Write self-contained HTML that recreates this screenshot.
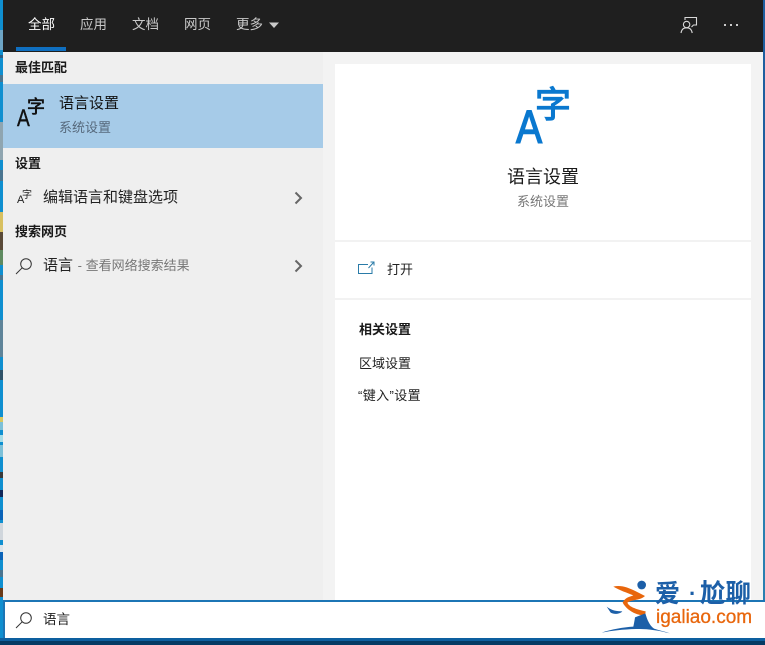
<!DOCTYPE html>
<html lang="zh">
<head>
<meta charset="utf-8">
<style>
html,body{margin:0;padding:0;}
body{width:765px;height:645px;overflow:hidden;position:relative;background:#0f8fd0;font-family:"Liberation Sans","Noto Sans CJK SC",sans-serif;}
div,svg{position:absolute;}
.t{white-space:nowrap;line-height:20px;}
.nav{top:15px;font-size:13.5px;color:#c9c9c9;}
.h{font-size:13px;font-weight:bold;color:#1a1a1a;}
.s{left:0;width:3px;}
</style>
</head>
<body>
<!-- desktop strips -->
<div class="s" style="top:0;height:645px;background:#0f8fd0"></div>
<div class="s" style="top:30px;height:20px;background:#6ea5c5"></div>
<div class="s" style="top:55px;height:3px;background:#2d5f85"></div>
<div class="s" style="top:75px;height:7px;background:#4a7590"></div>
<div class="s" style="top:122px;height:38px;background:#8fa5b0"></div>
<div class="s" style="top:170px;height:11px;background:#4a7590"></div>
<div class="s" style="top:212px;height:20px;background:#d8c060"></div>
<div class="s" style="top:232px;height:18px;background:#5a4a38"></div>
<div class="s" style="top:250px;height:15px;background:#5f8a60"></div>
<div class="s" style="top:275px;height:5px;background:#4a7590"></div>
<div class="s" style="top:320px;height:37px;background:#5f8499"></div>
<div class="s" style="top:370px;height:10px;background:#2f5268"></div>
<div class="s" style="top:417px;height:5px;background:#d8c860"></div>
<div class="s" style="top:422px;height:8px;background:#7cc0d8"></div>
<div class="s" style="top:435px;height:7px;background:#a5dde8"></div>
<div class="s" style="top:445px;height:12px;background:#7cc0d8"></div>
<div class="s" style="top:472px;height:6px;background:#3a3a3a"></div>
<div class="s" style="top:490px;height:7px;background:#10285a"></div>
<div class="s" style="top:510px;height:10px;background:#0a63b8"></div>
<div class="s" style="top:523px;height:17px;background:#d0d6dc"></div>
<div class="s" style="top:545px;height:7px;background:#d8e4ec"></div>
<div class="s" style="top:552px;height:8px;background:#0a63b8"></div>
<div class="s" style="top:570px;height:7px;background:#4a7590"></div>
<div class="s" style="top:588px;height:9px;background:#6a3a18"></div>
<div style="left:763px;top:0;width:2px;height:600px;background:#1f5f9f"></div>
<div style="left:763px;top:400px;width:2px;height:200px;background:#2a7fb0"></div>

<!-- header -->
<div style="left:3px;top:0;width:760px;height:52px;background:#1f1f1f"></div>
<div class="t nav" style="left:28px;color:#fff">全部</div>
<div style="left:16px;top:47px;width:50px;height:4px;background:#0f6fc0"></div>
<div class="t nav" style="left:80px">应用</div>
<div class="t nav" style="left:132px">文档</div>
<div class="t nav" style="left:184px">网页</div>
<div class="t nav" style="left:236px">更多</div>
<svg style="left:268px;top:22px" width="12" height="7" viewBox="0 0 12 7"><path d="M1 0.5H11L6 6Z" fill="#c9c9c9"/></svg>

<svg style="left:680px;top:16px" width="18" height="18" viewBox="0 0 18 18" fill="none" stroke="#d8d8d8" stroke-width="1.1">
<path d="M5 4V1.5H16.5V9H13.5L11.5 11"/>
<circle cx="6.6" cy="8.5" r="3.2"/>
<path d="M1 17C1.5 13.5 3.5 11.8 6.6 11.8S11.7 13.5 12.2 17"/>
</svg>
<div style="left:724px;top:24px;width:2px;height:2px;background:#ccc"></div>
<div style="left:730px;top:24px;width:2px;height:2px;background:#ccc"></div>
<div style="left:736px;top:24px;width:2px;height:2px;background:#ccc"></div>

<!-- left panel -->
<div style="left:3px;top:52px;width:320px;height:548px;background:#efefef"></div>
<div class="t h" style="left:15px;top:58px">最佳匹配</div>
<div style="left:3px;top:84px;width:320px;height:64px;background:#a6cbe8"></div>
<div class="t" style="left:17px;top:108px;font-size:24px;line-height:22px;color:#111;-webkit-text-stroke:.4px #111;transform:scaleX(.8);transform-origin:left">A</div>
<div class="t" style="left:27px;top:96px;font-size:18px;line-height:22px;color:#111;-webkit-text-stroke:.6px #111">字</div>
<div class="t" style="left:59px;top:94px;font-size:15px;color:#111">语言设置</div>
<div class="t" style="left:59px;top:118px;font-size:13px;color:#56697c">系统设置</div>

<div class="t h" style="left:15px;top:154px">设置</div>
<div class="t" style="left:17px;top:195px;font-size:11px;line-height:11px;color:#222">A</div>
<div class="t" style="left:22px;top:190px;font-size:10px;line-height:11px;color:#222">字</div>
<div class="t" style="left:43px;top:188px;font-size:15px;color:#222">编辑语言和键盘选项</div>
<svg style="left:294px;top:191px" width="9" height="14" viewBox="0 0 9 14" fill="none" stroke="#666" stroke-width="2"><path d="M1.5 1.5L7 7L1.5 12.5"/></svg>

<div class="t h" style="left:15px;top:222px">搜索网页</div>
<svg style="left:15px;top:257px" width="18" height="18" viewBox="0 0 18 18" fill="none" stroke="#333" stroke-width="1"><circle cx="11" cy="7" r="5.3"/><path d="M7.2 10.8L1 17"/></svg>
<div class="t" style="left:43px;top:256px;font-size:15px;color:#222">语言<span style="font-size:13px;color:#777;margin-left:1px"> - 查看网络搜索结果</span></div>
<svg style="left:294px;top:259px" width="9" height="14" viewBox="0 0 9 14" fill="none" stroke="#666" stroke-width="2"><path d="M1.5 1.5L7 7L1.5 12.5"/></svg>

<!-- right panel -->
<div style="left:323px;top:52px;width:440px;height:548px;background:#f3f3f3"></div>
<div style="left:335px;top:64px;width:416px;height:536px;background:#fff"></div>
<div class="t" style="left:516px;top:107px;font-size:46px;line-height:40px;color:#0a78cf;-webkit-text-stroke:1.4px #0a78cf;transform:scaleX(.85);transform-origin:left">A</div>
<div class="t" style="left:535px;top:85px;font-size:36px;line-height:40px;color:#0a78cf;-webkit-text-stroke:1.2px #0a78cf">字</div>
<div class="t" style="left:507px;top:167px;font-size:18px;color:#1a1a1a">语言设置</div>
<div class="t" style="left:517px;top:192px;font-size:13px;color:#777">系统设置</div>
<div style="left:335px;top:240px;width:416px;height:2px;background:#f2f2f2"></div>
<div style="left:335px;top:298px;width:416px;height:2px;background:#f2f2f2"></div>
<svg style="left:358px;top:261px" width="17" height="14" viewBox="0 0 17 14" fill="none" stroke="#2a7ba8" stroke-width="1"><path d="M10 3.5H0.5V12.5H14V6.5"/><path d="M10.5 7L15.5 1.5M12.5 1H16V4.5"/></svg>
<div class="t" style="left:387px;top:260px;font-size:13px;color:#222">打开</div>
<div class="t h" style="left:359px;top:320px;color:#1a1a1a">相关设置</div>
<div class="t" style="left:359px;top:354px;font-size:13px;color:#222">区域设置</div>
<div class="t" style="left:358px;top:386px;font-size:13px;color:#222;letter-spacing:.4px">“键入”设置</div>

<!-- search box -->
<div style="left:4px;top:600px;width:761px;height:2px;background:#1c75b5"></div>
<div style="left:5px;top:602px;width:760px;height:36px;background:#fff"></div>
<div style="left:3px;top:600px;width:2px;height:38px;background:#1c75b5"></div>
<svg style="left:15px;top:611px" width="18" height="18" viewBox="0 0 18 18" fill="none" stroke="#333" stroke-width="1"><circle cx="11" cy="7" r="5.3"/><path d="M7.2 10.8L1 17"/></svg>
<div class="t" style="left:43px;top:610px;font-size:13.5px;color:#222">语言</div>
<div style="left:0;top:638px;width:765px;height:3px;background:#0d5f9f"></div>
<div style="left:0;top:641px;width:765px;height:4px;background:#053a63"></div>

<!-- watermark -->
<svg style="left:590px;top:570px" width="175" height="75" viewBox="0 0 525 225">
<circle cx="155" cy="45" r="13" fill="#1c5fa8"/>
<path d="M70 50C100 42 130 60 165 78C150 92 125 88 112 98C118 112 140 118 167 124L165 137C135 135 110 120 98 98C105 82 120 80 130 76C110 68 90 62 70 50Z" fill="#e8660c"/>
<path d="M50 110C65 122 80 124 97 124C90 132 72 134 62 128Z" fill="#1c5fa8"/>
<path d="M135 142C145 138 155 134 166 130C172 150 178 165 192 176C210 182 226 185 240 190C200 180 170 176 140 177C100 178 65 182 35 188C65 178 100 172 130 170C132 160 134 150 135 142Z" fill="#1c5fa8"/>
</svg>
<div class="t" style="left:655px;top:581px;font-size:25px;line-height:26px;font-weight:bold;color:#1c5fa8">爱</div>
<div class="t" style="left:689px;top:581px;font-size:22px;line-height:26px;font-weight:bold;color:#1c5fa8">·</div>
<div class="t" style="left:700px;top:581px;font-size:25.5px;line-height:26px;font-weight:bold;color:#1c5fa8">尬聊</div>
<div class="t" style="left:656px;top:607px;font-size:19px;line-height:22px;color:#e8660c;-webkit-text-stroke:.3px #e8660c">igaliao.com</div>
</body>
</html>
